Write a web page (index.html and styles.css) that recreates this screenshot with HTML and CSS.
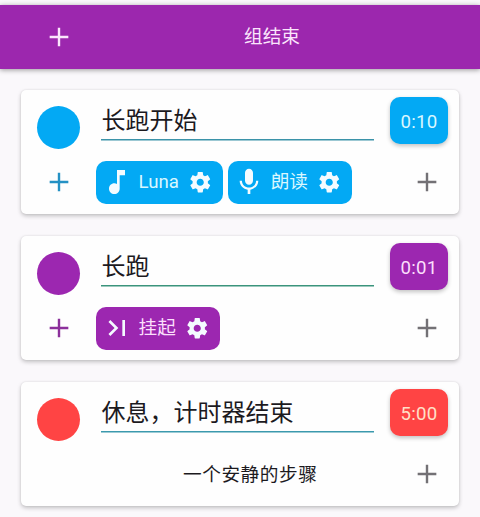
FILE: index.html
```html
<!DOCTYPE html>
<html lang="zh-CN">
<head>
<meta charset="utf-8">
<title>组结束</title>
<link rel="stylesheet" href="styles.css">
</head>
<body>
<svg width="0" height="0" class="defs">
  <symbol id="add" viewBox="0 0 24 24"><path d="M19 12.900h-6.100V19h-1.800v-6.100H5v-1.800h6.100V5h1.800v6.100H19z"/></symbol>
  <symbol id="note" viewBox="0 0 24 24"><path d="M12 3v10.55c-.59-.34-1.27-.55-2-.55-2.21 0-4 1.79-4 4s1.79 4 4 4 4-1.79 4-4V7h4V3z"/></symbol>
  <symbol id="mic" viewBox="0 0 24 24"><path d="M12 14c1.66 0 2.99-1.34 2.99-3L15 5c0-1.66-1.34-3-3-3S9 3.34 9 5v6c0 1.66 1.34 3 3 3zm5.3-3c0 3-2.54 5.1-5.3 5.1S6.700 14 6.700 11H5c0 3.410 2.720 6.230 6 6.720V21h2v-3.280c3.280-.480 6-3.300 6-6.720z"/></symbol>
  <symbol id="last" viewBox="0 0 24 24"><path d="M5.590 7.410 10.180 12l-4.590 4.590L7 18l6-6-6-6zM16 6h2v12h-2z"/></symbol>
  <symbol id="gear" viewBox="0 0 24 24"><path d="M19.430 12.980c.040-.320.070-.640.070-.980s-.030-.660-.070-.980l2.110-1.650c.190-.150.240-.420.120-.640l-2-3.460c-.120-.220-.390-.300-.610-.220l-2.490 1c-.520-.400-1.080-.730-1.690-.980l-.380-2.650C14.460 2.180 14.250 2 14 2h-4c-.250 0-.460.180-.490.420l-.380 2.650c-.610.250-1.170.590-1.690.980l-2.490-1c-.230-.090-.490 0-.610.220l-2 3.460c-.130.220-.070.490.120.640l2.110 1.650c-.040.320-.070.650-.070.980s.030.660.070.980l-2.110 1.650c-.190.150-.240.420-.120.640l2 3.460c.120.220.390.300.610.220l2.490-1c.520.400 1.080.730 1.690.980l.380 2.650c.030.240.240.420.490.420h4c.250 0 .460-.180.490-.420l.380-2.650c.610-.250 1.170-.590 1.690-.980l2.490 1c.230.090.490 0 .610-.220l2-3.460c.120-.220.070-.490-.120-.640zM12 15.500c-1.930 0-3.500-1.570-3.500-3.500s1.570-3.500 3.500-3.500 3.500 1.570 3.500 3.500-1.570 3.500-3.500 3.500z"/></symbol>
</svg>
<header class="bar">
  <svg class="icon"><use href="#add"/></svg>
  <span class="bar-title">组结束</span>
</header>
<main class="steps">
  <section class="card blue">
    <div class="top"><span class="dot"></span><div class="name">长跑开始</div><div class="time">0:10</div></div>
    <div class="actions">
      <svg class="icon add"><use href="#add"/></svg>
      <div class="chips">
        <div class="chip"><svg class="icon"><use href="#note"/></svg><span>Luna</span><svg class="gear"><use href="#gear"/></svg></div>
        <div class="chip"><svg class="icon"><use href="#mic"/></svg><span>朗读</span><svg class="gear"><use href="#gear"/></svg></div>
      </div>
      <svg class="icon more"><use href="#add"/></svg>
    </div>
  </section>
  <section class="card purple">
    <div class="top"><span class="dot"></span><div class="name">长跑</div><div class="time">0:01</div></div>
    <div class="actions">
      <svg class="icon add"><use href="#add"/></svg>
      <div class="chips">
        <div class="chip"><svg class="icon"><use href="#last"/></svg><span>挂起</span><svg class="gear"><use href="#gear"/></svg></div>
      </div>
      <svg class="icon more"><use href="#add"/></svg>
    </div>
  </section>
  <section class="card red">
    <div class="top"><span class="dot"></span><div class="name">休息，计时器结束</div><div class="time">5:00</div></div>
    <div class="actions">
      <div class="quiet">一个安静的步骤</div>
      <svg class="icon more"><use href="#add"/></svg>
    </div>
  </section>
</main>
</body>
</html>
```
FILE: styles.css
```css
* { box-sizing: border-box; }
body {
  margin: 0;
  padding-top: 4.5px;
  height: 517px;
  overflow: hidden;
  background: #faf8fb;
  color: #1c1a1e;
  font: 18.67px/24px Roboto, "Noto Sans CJK SC", sans-serif;
}
.defs { display: none; }
svg { display: block; flex: none; fill: currentColor; }
.icon { width: 32px; height: 32px; }
.bar {
  display: flex;
  align-items: center;
  height: 64px;
  padding-left: 42.5px;
  background: #9c27ae;
  color: #fbe6fc;
  box-shadow: 0 1px 5px rgba(0, 0, 0, .4);
}
.bar-title { margin-left: 169.5px; padding-top: 1px; }
.steps {
  display: flex;
  flex-direction: column;
  gap: 21.5px;
  padding: 21.2px 21px 0;
}
.card {
  flex: none;
  height: 124.5px;
  padding: 7px 11px 10.3px 16px;
  border-radius: 5px;
  background: #fefefe;
  box-shadow: 0 2px 4px rgba(0, 0, 0, .22), 0 0 2px rgba(0, 0, 0, .1);
}
.blue { --tone: #03a9f4; --line: #3b93a9; --plus: #2491c4; --ink: #d9f7ff; }
.purple { --tone: #9c27b0; --line: #3b947c; --plus: #8c309b; --ink: #fbdffc; }
.red { --tone: #ff4444; --line: #3b99ad; --ink: #ffe0c8; }
.top { display: flex; height: 47px; }
.dot {
  width: 43px;
  height: 43px;
  margin-top: 9px;
  border-radius: 50%;
  background: var(--tone);
}
.name {
  width: 273px;
  height: 43px;
  margin: 0 16px 0 21px;
  padding-left: .5px;
  border-bottom: 1px solid var(--line);
  box-shadow: 0 .5px 0 var(--line);
  font-size: 24px;
  line-height: 49px;
  white-space: nowrap;
}
.time {
  width: 58px;
  border-radius: 10px;
  background: var(--tone);
  color: var(--ink);
  line-height: 50px;
  text-align: center;
  letter-spacing: .2px;
  box-shadow: 0 2px 4px rgba(0, 0, 0, .24);
}
.actions {
  display: flex;
  align-items: center;
  height: 43px;
  margin-top: 17.2px;
  padding: 0 5.5px;
}
.add { color: var(--plus); }
.more { color: #737175; margin-left: auto; }
.chips { display: flex; gap: 5px; margin-left: 21.5px; }
.chip {
  display: flex;
  align-items: center;
  height: 43px;
  padding: 0 10.4px 0 5px;
  border-radius: 10px;
  background: var(--tone);
  color: var(--ink);
}
.chip svg { color: #f4fbff; }
.chip span { margin: 0 9.4px 0 5.5px; }
.gear { width: 24.5px; height: 24.5px; }
.quiet { margin-left: 140.5px; padding-top: 2px; letter-spacing: .55px; }
```
